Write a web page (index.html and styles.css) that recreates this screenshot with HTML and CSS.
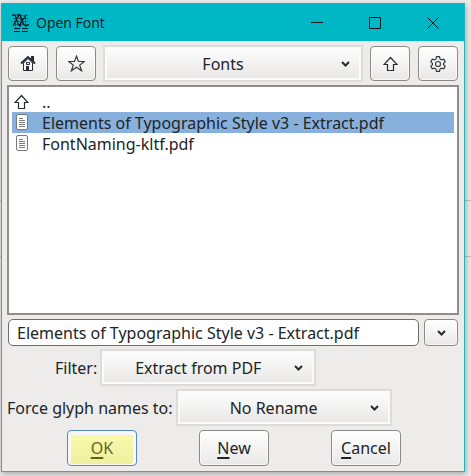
FILE: index.html
```html
<!DOCTYPE html>
<html lang="en">
<head>
<meta charset="utf-8">
<title>Open Font</title>
<link rel="stylesheet" href="styles.css">
</head>
<body>
<main class="window">
  <header class="titlebar">
    <svg class="app-icon" width="18" height="20" viewBox="0 0 18 20" fill="none" stroke="#063c43">
      <path d="M0 2.500h16M1 5.500h15M1 8.500h15M1 11.500h15M3.500 1v13M8.500 1v13M13.500 1v13" stroke-width="1" opacity=".55"/>
      <path d="M0 2.500c3-2 4 1 5 5s2 6 4 5M5 1.500c3-1 4 2 5 6s3 7 7 4M7 2 1 13M14 2 7 13" stroke="#071316" stroke-width="1.200"/>
      <path d="M2 15.500h6M10 15.500h6M2 18.500h6M10 18.500h6" stroke="#071316" stroke-width="1"/>
    </svg>
    <h1 class="title">Open Font</h1>
    <div class="controls">
      <button class="control" aria-label="Minimize"><svg width="12" height="12"><path d="M0 5.500h12"/></svg></button>
      <button class="control" aria-label="Maximize"><svg width="12" height="12"><path d="M.5.5h11v11H.5z"/></svg></button>
      <button class="control" aria-label="Close"><svg width="12" height="12"><path d="m.5.5 11 11m0-11-11 11"/></svg></button>
    </div>
  </header>
  <form class="content">
    <div class="toolbar">
      <button type="button" class="button icon-button" aria-label="Home">
        <svg width="16" height="17" viewBox="0 0 16 17"><path d="M3.500 8v7.500h9V8L8 3.500z" fill="#f7f7f7" stroke="#252b30"/><path d="M1 8.500 8 2l7 6.500" fill="none" stroke="#252b30" stroke-width="2"/><path d="M11 1h3v6l-3-3zM6 11h3v5H6z" fill="#252b30"/><path d="M6.500 7.500h3v2h-3z" fill="none" stroke="#252b30"/></svg>
      </button>
      <button type="button" class="button icon-button" aria-label="Bookmarks">
        <svg width="17" height="17" viewBox="0 0 17 17"><path d="m8.500 1.200 2 5.300h5.700l-4.500 3.600 1.900 5.700-5.100-3.500-5.100 3.500 1.900-5.700L.8 6.500h5.700z" fill="none" stroke="#343a40" stroke-width="1.200"/></svg>
      </button>
      <div class="picker picker-wide">
        <select class="select" aria-label="Folder"><option>Fonts</option></select>
        <svg class="chevron" width="9" height="6" viewBox="0 0 9 6"><path d="m1 1 3.500 3.500L8 1"/></svg>
      </div>
      <button type="button" class="button icon-button" aria-label="Parent folder">
        <svg width="15" height="16" viewBox="0 0 15 16"><path d="M7.500 1.500 1 8.500h3.500v6h6v-6H14z" fill="none" stroke="#252b30" stroke-width="1.200"/></svg>
      </button>
      <button type="button" class="button icon-button" aria-label="Settings">
        <svg width="16" height="16" viewBox="0 0 16 16" fill="none" stroke="#343a40" stroke-width="1.200"><path d="M6.500.7h3l.5 2.200 1.500.9 2.200-.7 1.500 2.600L13.600 7.200v1.600l1.600 1.500-1.500 2.600-2.200-.7-1.500.9-.5 2.200h-3L6 13.100l-1.500-.9-2.200.7-1.500-2.600 1.600-1.500V7.200L.8 5.700l1.500-2.600 2.200.7L6 2.900z"/><circle cx="8" cy="8" r="2.500"/></svg>
      </button>
    </div>
    <ul class="files" role="listbox" aria-label="Files">
      <li class="file" role="option" aria-selected="false"><svg width="15" height="16" viewBox="0 0 15 16"><path d="M7.500 1.500 1 8.500h3.500v6h6v-6H14z" fill="none" stroke="#252b30" stroke-width="1.200"/></svg><span class="file-name">..</span></li>
      <li class="file selected" role="option" aria-selected="true"><svg width="15" height="17" viewBox="0 0 15 17"><rect x="2.500" y=".5" width="11" height="15" rx="1.500" fill="#fff" stroke="#777c7d"/><path d="M5 4.500h4M5 6.500h6M5 8.500h6M5 10.500h6M5 12.500h6" stroke="#777c7d"/></svg><span class="file-name">Elements of Typographic Style v3 - Extract.pdf</span></li>
      <li class="file" role="option" aria-selected="false"><svg width="15" height="17" viewBox="0 0 15 17"><rect x="2.500" y=".5" width="11" height="15" rx="1.500" fill="#fff" stroke="#777c7d"/><path d="M5 4.500h4M5 6.500h6M5 8.500h6M5 10.500h6M5 12.500h6" stroke="#777c7d"/></svg><span class="file-name">FontNaming-kltf.pdf</span></li>
    </ul>
    <div class="name-row">
      <input class="name" type="text" aria-label="File name" value="Elements of Typographic Style v3 - Extract.pdf">
      <button type="button" class="button history" aria-label="Recent files"><svg class="chevron-inline" width="9" height="6" viewBox="0 0 9 6"><path d="m1 1 3.500 3.500L8 1"/></svg></button>
    </div>
    <div class="field filter">
      <label for="filter">Filter:</label>
      <div class="picker">
        <select class="select" id="filter"><option>Extract from PDF</option></select>
        <svg class="chevron" width="9" height="6" viewBox="0 0 9 6"><path d="m1 1 3.500 3.500L8 1"/></svg>
      </div>
    </div>
    <div class="field">
      <label for="rename">Force glyph names to:</label>
      <div class="picker">
        <select class="select" id="rename"><option>No Rename</option></select>
        <svg class="chevron" width="9" height="6" viewBox="0 0 9 6"><path d="m1 1 3.500 3.500L8 1"/></svg>
      </div>
    </div>
    <div class="actions">
      <button type="button" class="button action primary"><span class="key">O</span>K</button>
      <button type="button" class="button action"><span class="key">N</span>ew</button>
      <button type="button" class="button action"><span class="key">C</span>ancel</button>
    </div>
  </form>
</main>
</body>
</html>
```
FILE: styles.css
```css
* {
  box-sizing: border-box;
}

body {
  margin: 0;
  min-height: 100vh;
  display: flex;
  padding: 3px 6px 4px 1px;
  background:
    linear-gradient(#c4c4c4, #c4c4c4) 0 200px / 100% 1px no-repeat,
    linear-gradient(#c4c4c4, #c4c4c4) 0 256px / 100% 1px no-repeat,
    #ececec;
  color: #202427;
  font: 16px/21px "Noto Sans", sans-serif;
}

button,
input,
select {
  margin: 0;
  font: inherit;
  color: inherit;
}

svg {
  display: block;
  flex: none;
}

.window {
  flex: 1;
  min-width: 0;
  display: flex;
  flex-direction: column;
  border: 1px solid #1db5c0;
  background: #edecea;
  box-shadow: 1px 2px 6px rgba(0, 0, 0, .3);
}

.titlebar {
  display: flex;
  align-items: center;
  height: 37px;
  padding: 0 2px 0 10px;
  background: #00b7c5;
}

.title {
  flex: 1;
  margin: 0 0 0 6px;
  color: #06191b;
  font: 14px/20px "Open Sans", sans-serif;
}

.controls {
  display: flex;
}

.control {
  display: grid;
  place-items: center;
  width: 58px;
  height: 36px;
  padding: 0;
  border: 0;
  background: none;
}

.control path {
  fill: none;
  stroke: #071316;
}

.content {
  flex: 1;
  display: flex;
  flex-direction: column;
  padding: 4px 5px 5px;
}

.toolbar {
  display: flex;
  align-items: center;
  gap: 8px;
  padding: 0 1px;
}

.button {
  display: grid;
  place-items: center;
  padding: 0;
  border: 1px solid #8c8a88;
  border-radius: 4px;
  background: linear-gradient(#fff, #e9e8e7);
  box-shadow: inset 0 0 0 1px rgba(255, 255, 255, .6);
}

.icon-button {
  width: 40px;
  height: 35px;
}

.picker {
  position: relative;
  width: 216px;
  height: 37px;
  padding: 2px;
  background: #dddcda;
}

.picker-wide {
  flex: 1;
  width: auto;
  margin: 0 -1px;
}

.select {
  appearance: none;
  display: block;
  width: 100%;
  height: 100%;
  padding: 2px 20px 0 0;
  border: 2px solid #fbfbfb;
  border-radius: 0;
  background: linear-gradient(#fcfcfc, #e9e8e7);
  text-align: center;
  text-align-last: center;
}

.chevron {
  position: absolute;
  right: 13px;
  top: 16px;
  pointer-events: none;
}

.chevron path,
.chevron-inline path {
  fill: none;
  stroke: #252b30;
  stroke-width: 2;
}

.files {
  flex: 1;
  margin: 3px 0 4px;
  padding: 4px 3px 3px;
  border: 2px solid #8f8e8c;
  background: #fff;
  list-style: none;
}

.file {
  display: flex;
  align-items: center;
  gap: 13px;
  height: 21px;
  padding-left: 2px;
}

.file-name {
  padding-top: 2px;
}

.selected {
  background: #87b0dd;
}

.name-row {
  display: flex;
  gap: 5px;
  padding: 0 1px;
  margin-bottom: 3px;
}

.name {
  flex: 1;
  min-width: 0;
  height: 27px;
  padding: 0 8px;
  border: 1px solid #6e6c6a;
  border-radius: 5px;
  background: #fff;
}

.history {
  width: 34px;
  height: 27px;
}

.field {
  display: flex;
  align-items: center;
  gap: 3px;
  margin-bottom: 3px;
}

.field label {
  padding-top: 2px;
  white-space: nowrap;
}

.filter {
  padding-left: 48px;
}

.actions {
  display: flex;
  justify-content: space-around;
  padding: 0 27px 0 29px;
  margin-top: 1px;
}

.action {
  display: block;
  width: 70px;
  height: 36px;
}

.primary {
  border-color: #5489cb;
  background: linear-gradient(#fafaad, #efef9f);
  box-shadow: inset 0 4px #f7f7f7, inset 3px 0 #f7f7f7, inset -3px 0 #f7f7f7, inset 0 -1px #f7f7f7;
  color: #63631f;
}

.key {
  text-decoration: underline 2px;
  text-underline-offset: 3px;
  text-decoration-skip-ink: none;
}
```
